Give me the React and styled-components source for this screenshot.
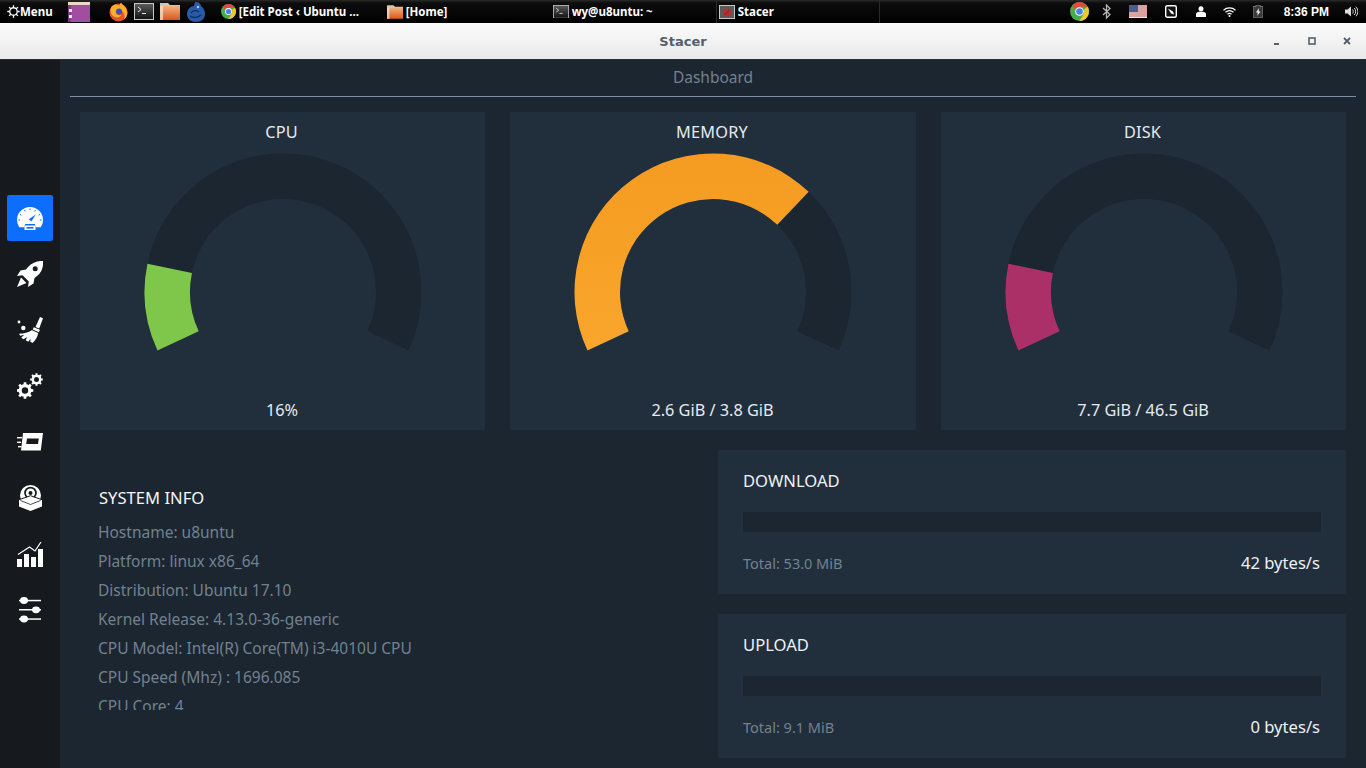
import React from 'react'
import styled, { createGlobalStyle } from 'styled-components'

const GlobalStyle = createGlobalStyle`
  html, body { margin: 0; padding: 0; background: #1b2631; overflow: hidden; }
  * { box-sizing: border-box; }
`

// gauge maths: arc runs 230deg, from 25deg below the left horizontal
const CX = 140
const CY = 139
const OUTER = 138.5
const INNER = 93

function polar(r, deg) {
  const a = (deg * Math.PI) / 180
  return [CX - r * Math.cos(a), CY - r * Math.sin(a)]
}

function arcPath(from, to) {
  const [x1, y1] = polar(OUTER, from)
  const [x2, y2] = polar(OUTER, to)
  const [x3, y3] = polar(INNER, to)
  const [x4, y4] = polar(INNER, from)
  const large = to - from > 180 ? 1 : 0
  return `M${x1} ${y1}A${OUTER} ${OUTER} 0 ${large} 1 ${x2} ${y2}L${x3} ${y3}A${INNER} ${INNER} 0 ${large} 0 ${x4} ${y4}Z`
}

function Gauge({ percent, color }) {
  const end = -25 + (230 * percent) / 100
  return (
    <GaugeSvg viewBox="0 0 280 210" width="280" height="210">
      <path d={arcPath(-25, 205)} fill="#1b2631" />
      <path d={arcPath(-25, end)} fill={color} />
    </GaugeSvg>
  )
}

// toothed wheel with a round hole, for the tools icon
function gearPath(cx, cy, outer, root, hole, teeth) {
  const step = (Math.PI * 2) / teeth
  let d = ''
  for (let i = 0; i < teeth; i++) {
    const a = i * step
    const pts = [
      [root, a - step * 0.5],
      [root, a - step * 0.28],
      [outer, a - step * 0.2],
      [outer, a + step * 0.2],
      [root, a + step * 0.28],
    ]
    pts.forEach(([r, t], j) => {
      const x = (cx + r * Math.cos(t)).toFixed(2)
      const y = (cy + r * Math.sin(t)).toFixed(2)
      d += `${i === 0 && j === 0 ? 'M' : 'L'}${x} ${y}`
    })
  }
  d += `ZM${cx + hole} ${cy}a${hole} ${hole} 0 1 0 ${-hole * 2} 0a${hole} ${hole} 0 1 0 ${hole * 2} 0Z`
  return d
}

const Window = styled.div`
  width: 1366px;
  height: 768px;
  display: flex;
  flex-direction: column;
  overflow: hidden;
  font-family: "Noto Sans", sans-serif;
`
const Panel = styled.div`
  height: 23px;
  flex: none;
  display: flex;
  align-items: center;
  background: linear-gradient(#2a2a2a 0, #0c0c0c 3px, #000 100%);
  color: #fff;
  font-family: "Noto Sans", sans-serif;
  font-size: 11.5px;
  font-weight: 700;
  padding-left: 7px;
`
const PanelItem = styled.div`
  display: flex;
  align-items: center;
  flex: none;
  gap: ${p => p.$gap ?? 3}px;
  width: ${p => (p.$w ? `${p.$w}px` : 'auto')};
  margin-left: ${p => p.$ml ?? 0}px;
  height: 100%;
  white-space: nowrap;
`
const Separator = styled.div`
  width: 1px;
  height: 100%;
  flex: none;
  background: #2b2b2b;
`
const Tray = styled.div`
  margin-left: auto;
  display: flex;
  align-items: center;
  height: 100%;
  padding-right: 8px;
`
const Clock = styled.span`
  margin-left: 21px;
  font-family: "Liberation Sans", sans-serif;
  font-size: 12px;
`
const TitleBar = styled.div`
  height: 37px;
  flex: none;
  position: relative;
  display: flex;
  align-items: center;
  justify-content: center;
  background: linear-gradient(#fbfbfb, #e9e9e9);
  border-bottom: 1px solid #2d2d2d;
  color: #555f6a;
  font-family: "DejaVu Sans", sans-serif;
  font-size: 13px;
  font-weight: 700;
`
const WindowButtons = styled.div`
  position: absolute;
  right: 15px;
  top: 14px;
  display: flex;
  gap: 27px;
`
const WinIcon = styled.svg`
  display: block;
`
const Body = styled.div`
  flex: 1;
  display: flex;
  min-height: 0;
`
const Sidebar = styled.nav`
  width: 60px;
  flex: none;
  background: #16191d;
  display: flex;
  flex-direction: column;
  align-items: center;
  padding-top: 135px;
  gap: 10px;
`
const NavButton = styled.div`
  width: 46px;
  height: 46px;
  border-radius: 2px;
  display: flex;
  align-items: center;
  justify-content: center;
  background: ${p => (p.$active ? '#0d6efd' : 'transparent')};
  color: #fff;
`
const Main = styled.main`
  flex: 1;
  min-width: 0;
  background: #1b2631;
  padding: 0 10px;
  display: flex;
  flex-direction: column;
`
const PageTitle = styled.div`
  height: 37px;
  flex: none;
  display: flex;
  align-items: center;
  justify-content: center;
  border-bottom: 1px solid #7d90a3;
  color: #73818f;
  font-size: 15.5px;
  padding-bottom: 2px;
`
const Gauges = styled.section`
  display: grid;
  grid-template-columns: 405px 406px 405px;
  column-gap: 25px;
  padding: 15px 10px 0;
`
const GaugeCard = styled.div`
  height: 318px;
  background: #212f3d;
  display: flex;
  flex-direction: column;
  align-items: center;
  color: #e6eaee;
  font-size: 16.3px;
`
const GaugeTitle = styled.div`
  height: 41px;
  line-height: 40px;
  flex: none;
  padding-right: 2px;
  letter-spacing: 0.2px;
`
const GaugeSvg = styled.svg`
  flex: none;
`
const GaugeValue = styled.div`
  margin-top: 35px;
  line-height: 24px;
  padding-right: 1px;
`
const Lower = styled.section`
  display: flex;
  padding: 20px 10px 0;
`
const InfoBlock = styled.div`
  width: 638px;
  flex: none;
  padding: 36px 0 0 18px;
`
const InfoTitle = styled.div`
  color: #f4f6f8;
  font-size: 16.6px;
  line-height: 24px;
  margin: 0 0 8px 1px;
`
const InfoList = styled.div`
  height: 192px;
  overflow: hidden;
  color: #73818f;
  font-size: 15.5px;
`
const InfoRow = styled.div`
  height: 29px;
  line-height: 29px;
  white-space: nowrap;
`
const Network = styled.div`
  flex: 1;
  display: flex;
  flex-direction: column;
  gap: 20px;
`
const NetCard = styled.div`
  height: 144px;
  background: #212f3d;
  padding: 19px 25px 0;
`
const NetTitle = styled.div`
  color: #eef1f4;
  font-size: 16.6px;
  line-height: 24px;
`
const NetBar = styled.div`
  height: 20px;
  margin-top: 19px;
  background: #1b2631;
`
const NetFooter = styled.div`
  display: flex;
  justify-content: space-between;
  align-items: center;
  margin-top: 19px;
  padding-right: 1px;
`
const NetTotal = styled.span`
  color: #73818f;
  font-size: 14.5px;
`
const NetSpeed = styled.span`
  color: #eef1f4;
  font-size: 16.6px;
`
const HiddenDefs = styled.svg`
  position: absolute;
  width: 0;
  height: 0;
`

const MenuGear = () => (
  <svg width="13" height="13" viewBox="0 0 16 16" fill="none" stroke="#fff" strokeWidth="1.6">
    <circle cx="8" cy="8" r="4.6" />
    <path d="M8 .4v2.8M8 12.800v2.800M.4 8h2.800M12.800 8h2.800M2.600 2.600l2 2M11.400 11.400l2 2M2.600 13.400l2-2M11.400 4.600l2-2" />
  </svg>
)
const MintMenu = () => (
  <svg width="22" height="20" viewBox="0 0 22 20">
    <rect width="22" height="20" fill="#a24ea0" />
    <rect width="22" height="3" fill="#e9dcc4" />
    <rect y="3" width="3" height="17" fill="#7e3a80" />
    <rect x="1" y="7" width="3" height="3" fill="#eee" />
    <rect x="1" y="13" width="3" height="3" fill="#eee" />
  </svg>
)
const Firefox = () => (
  <svg width="19" height="20" viewBox="0 0 20 20">
    <circle cx="10" cy="10.500" r="9.500" fill="#e4532a" />
    <path d="M3 4c4-3 5-2 7-1s1-2 3-3c0 2 5 4 6 9 1 4-1 7-3 9 1-4 0-8-3-9-2-1-5 0-5 2s3 3 5 2c-1 3-6 4-9 1S1 7 3 4z" fill="#f8b02c" />
    <circle cx="10.500" cy="9.500" r="3.200" fill="#3c4fb4" />
  </svg>
)
const Terminal = ({ size = 20 }) => (
  <svg width={size} height={size * 0.85} viewBox="0 0 20 17">
    <defs>
      <linearGradient id="termbg" x1="0" y1="0" x2="0" y2="1">
        <stop offset="0" stopColor="#5c5c5c" />
        <stop offset="1" stopColor="#111" />
      </linearGradient>
    </defs>
    <rect x=".5" y=".5" width="19" height="16" fill="url(#termbg)" stroke="#c8c8c8" />
    <path d="M4 4l3 2.500L4 9M8 10.500h4" stroke="#eee" strokeWidth="1" fill="none" />
  </svg>
)
const Folder = ({ w = 20, h = 17 }) => (
  <svg width={w} height={h} viewBox="0 0 20 17">
    <defs>
      <linearGradient id="foldbg" x1="0" y1="0" x2="0" y2="1">
        <stop offset="0" stopColor="#f2b27c" />
        <stop offset="1" stopColor="#d9581e" />
      </linearGradient>
    </defs>
    <path d="M0 0h8l2 2h10v3H0z" fill="#cfc6bb" />
    <rect y="3" width="20" height="14" fill="url(#foldbg)" />
    <rect width="3" height="14" y="3" fill="#f7e6d4" opacity=".7" />
  </svg>
)
const Chameleon = () => (
  <svg width="18" height="20" viewBox="0 0 18 20">
    <path d="M9 0c3 0 5 2 5 4 3 2 4 5 4 8 0 5-4 8-9 8s-9-3-9-8c0-5 4-8 7-8 0-2 1-4 2-4z" fill="#2a5aa8" />
    <path d="M4 11c2-3 6-3 8-1M3 14c3 2 8 2 11-1" stroke="#0f2d5f" strokeWidth="1.400" fill="none" />
    <circle cx="11" cy="5" r="1.200" fill="#b9d3f2" />
  </svg>
)
const Chrome = ({ size = 15 }) => (
  <svg width={size} height={size} viewBox="0 0 20 20">
    <circle cx="10" cy="10" r="10" fill="#4aae48" />
    <path d="M10 0a10 10 0 0 1 8.660 5H10a5 5 0 0 0-4.600 3L2.200 3.600A10 10 0 0 1 10 0z" fill="#dd4b3e" />
    <path d="M18.660 5A10 10 0 0 1 10 20l4.300-7.500A5 5 0 0 0 14.600 8L18.660 5z" fill="#f6c62d" />
    <circle cx="10" cy="10" r="4.600" fill="#fff" />
    <circle cx="10" cy="10" r="3.500" fill="#4a82e8" />
  </svg>
)
const StacerTask = () => (
  <svg width="16" height="14" viewBox="0 0 16 14">
    <rect x=".5" y=".5" width="15" height="13" fill="#5b5b5b" stroke="#c8c8c8" />
    <circle cx="8" cy="7.500" r="4" fill="#b52f2f" />
    <path d="M5.500 10l5-5" stroke="#742020" strokeWidth="1" />
  </svg>
)
const Bluetooth = () => (
  <svg width="9" height="15" viewBox="0 0 9 15" fill="none" stroke="#b5b5b5" strokeWidth="1.300">
    <path d="M1 4l7 6.500L4.500 14V1L8 4.500 1 11" />
  </svg>
)
const Flag = () => (
  <svg width="18" height="13" viewBox="0 0 18 13">
    <rect width="18" height="13" fill="#eee" />
    <path d="M0 1h18M0 3h18M0 5h18M0 7h18M0 9h18M0 11h18" stroke="#c9574f" strokeWidth="1" />
    <rect width="9" height="7" fill="#4a5d96" />
  </svg>
)
const Sync = () => (
  <svg width="12" height="13" viewBox="0 0 12 13">
    <rect x=".7" y=".7" width="10.600" height="11.600" rx="1.500" fill="#111" stroke="#fff" strokeWidth="1.400" />
    <path d="M3 3.500l5 3 1 3-3-1-3-5z" fill="#fff" />
  </svg>
)
const User = () => (
  <svg width="10" height="11" viewBox="0 0 10 11" fill="#fff">
    <circle cx="5" cy="2.700" r="2.500" />
    <path d="M0 11V8c0-1.500 2-2.500 5-2.500s5 1 5 2.500v3z" />
  </svg>
)
const Wifi = () => (
  <svg width="13" height="10" viewBox="0 0 13 10" fill="none" stroke="#fff" strokeWidth="1.200">
    <path d="M.5 3.200c3.500-3 8.500-3 12 0M2.500 5.200c2.400-2 5.600-2 8 0M4.500 7.200c1.200-1 2.800-1 4 0" />
    <circle cx="6.500" cy="9" r="1" fill="#fff" stroke="none" />
  </svg>
)
const Battery = () => (
  <svg width="10" height="13" viewBox="0 0 10 13">
    <path d="M3 0h4v1.500h3V13H0V1.500h3z" fill="#3a3a3a" stroke="#8b8b8b" strokeWidth=".8" />
    <path d="M6 3L3 7.500h2L4 11l3.500-4.500h-2z" fill="#fff" />
  </svg>
)
const Volume = () => (
  <svg width="13" height="11" viewBox="0 0 13 11" fill="#ddd">
    <path d="M0 3.500h2.500L6 .5v10L2.500 7.500H0z" />
    <path d="M7.500 3.500c1 1 1 3 0 4M9.300 2c1.800 2 1.800 5 0 7M11 .8c2.400 2.800 2.400 6.600 0 9.400" stroke="#ddd" strokeWidth="1" fill="none" />
  </svg>
)

const Speedometer = () => (
  <svg width="26" height="23" viewBox="0 0 26 23">
    <path d="M13 0a13 13 0 0 1 13 13c0 2.800-.9 5.200-2.300 7.200h-4.900l-1-3.200H8.200l-1 3.200H2.300A13 13 0 0 1 0 13 13 13 0 0 1 13 0z" fill="#fff" />
    <path d="M13 1.500v1.600M7.500 3l.8 1.400M18.500 3l-.8 1.400M3 7.400l1.400.8M23 7.400l-1.400.8M1.500 13h1.600M22.900 13h1.600" stroke="#0d6efd" strokeWidth="1" />
    <path d="M11.800 12.200l7.200-5-4.700 7.200z" fill="#0d6efd" />
    <rect x="7.500" y="18.500" width="11" height="4.500" fill="#fff" />
    <rect x="9.500" y="20" width="7" height="1.600" fill="#0d6efd" />
  </svg>
)
const Rocket = () => (
  <svg width="26" height="26" viewBox="0 0 26 26" fill="#fff">
    <path fillRule="evenodd" d="M26 0c-5.500-.3-11 1.500-15 6L9 8.500 3.500 9.500 0 15l5.500-.8 6.300 6.300-.8 5.500 5.500-3.500 1-5.500 2.500-2C25 11 26.500 5.500 26 0zM18.200 5.300a2.500 2.500 0 1 1 0 5 2.500 2.500 0 0 1 0-5z" />
    <path d="M4 16.500l5.500 5.500-6 2.500L0 26l1.500-3.500z" />
  </svg>
)
const Broom = () => (
  <svg width="27" height="26" viewBox="0 0 27 26" fill="#fff">
    <circle cx="2" cy="5" r="1.400" />
    <circle cx="6.300" cy="11" r="2.200" />
    <path d="M23 0l3 1.200-3.800 10.300-3.700-1.500z" />
    <path d="M16.800 10.300l6 2.500-.8 2.500-6.300-2.700z" />
    <path d="M15 13.300l6.200 2.600c-.7 4-2.800 7.500-5.700 10l-2.300-1.300.6-3-2.500 3.100-2.600-1.400 1.500-3.400-3.700 2.400-2.300-1.600 3-3-4 1-1.200-2c5.200-.2 9.500-.9 12.800-3.400z" />
  </svg>
)
const Gears = () => (
  <svg width="27" height="26" viewBox="0 0 27 26" fill="#fff" fillRule="evenodd">
    <path d={gearPath(8, 17.5, 8.4, 6.4, 3.2, 8)} />
    <path d={gearPath(19.5, 6.5, 6.4, 4.9, 2.5, 8)} />
  </svg>
)
const Disks = () => (
  <svg width="26" height="18" viewBox="0 0 26 18" fill="#fff">
    <path fillRule="evenodd" d="M6 0h20l-2.200 17.500H4zM10 5.500l-.8 5.500h11.800l.8-5.500z" />
    <rect y="4" width="5" height="1.400" />
    <rect y="8.600" width="4" height="1.400" />
    <rect x="1" y="13" width="3.500" height="1.400" />
  </svg>
)
const Package = () => (
  <svg width="23" height="26" viewBox="0 0 23 26">
    <circle cx="11.500" cy="10.500" r="10.500" fill="#fff" />
    <circle cx="11.500" cy="8" r="6.300" fill="#16191d" />
    <circle cx="11.500" cy="8" r="4.600" fill="#fff" />
    <circle cx="11.500" cy="8" r="2" fill="#16191d" />
    <path d="M0 15l11.500-4L23 15v6.500L11.500 26 0 21.500z" fill="#fff" />
    <path d="M.5 14.500l11-3.800 11 3.800" fill="none" stroke="#16191d" strokeWidth="1" />
    <path d="M1.500 15.500L11.500 19.500l10-4" fill="none" stroke="#16191d" strokeWidth=".8" />
  </svg>
)
const Chart = () => (
  <svg width="26" height="25" viewBox="0 0 26 25" fill="#fff">
    <rect y="17" width="5" height="8" />
    <rect x="7" y="12" width="5" height="13" />
    <rect x="14" y="15" width="5" height="10" />
    <rect x="21" y="7" width="5" height="18" />
    <path d="M1 12.500L12.500 5 18 9l6-9" fill="none" stroke="#fff" strokeWidth="1.200" />
  </svg>
)
const Sliders = () => (
  <svg width="22" height="26" viewBox="0 0 22 26" fill="#fff">
    <rect y="2.800" width="22" height="1.500" />
    <ellipse cx="5" cy="3.500" rx="4" ry="3.400" />
    <rect y="12" width="22" height="1.500" />
    <ellipse cx="17" cy="12.800" rx="4" ry="3.400" />
    <rect y="21.300" width="22" height="1.500" />
    <ellipse cx="5" cy="22" rx="4" ry="3.400" />
  </svg>
)

const sysInfo = [
  'Hostname: u8untu',
  'Platform: linux x86_64',
  'Distribution: Ubuntu 17.10',
  'Kernel Release: 4.13.0-36-generic',
  'CPU Model: Intel(R) Core(TM) i3-4010U CPU',
  'CPU Speed (Mhz) : 1696.085',
  'CPU Core: 4',
]

const gauges = [
  { title: 'CPU', value: '16%', percent: 16, color: '#7fc74a' },
  { title: 'MEMORY', value: '2.6 GiB / 3.8 GiB', percent: 69, color: 'url(#memGrad)' },
  { title: 'DISK', value: '7.7 GiB / 46.5 GiB', percent: 16, color: '#ab3067' },
]

const nets = [
  { title: 'DOWNLOAD', total: 'Total: 53.0 MiB', speed: '42 bytes/s' },
  { title: 'UPLOAD', total: 'Total: 9.1 MiB', speed: '0 bytes/s' },
]

export default function App() {
  return (
    <>
      <GlobalStyle />
      <HiddenDefs>
        <defs>
          <linearGradient id="memGrad" x1="0" y1="0" x2="0" y2="1">
            <stop offset="0" stopColor="#f59b21" />
            <stop offset="1" stopColor="#f9a62d" />
          </linearGradient>
        </defs>
      </HiddenDefs>
      <Window>
        <Panel>
          <PanelItem $gap={0}><MenuGear />Menu</PanelItem>
          <PanelItem $ml={15}><MintMenu /></PanelItem>
          <PanelItem $ml={19}><Firefox /></PanelItem>
          <PanelItem $ml={6}><Terminal /></PanelItem>
          <PanelItem $ml={6}><Folder /></PanelItem>
          <PanelItem $ml={7}><Chameleon /></PanelItem>
          <PanelItem $ml={16} $w={166}><Chrome />[Edit Post ‹ Ubuntu ...</PanelItem>
          <PanelItem $w={166}><Folder w={16} h={14} />[Home]</PanelItem>
          <PanelItem $w={163}><Terminal size={16} />wy@u8untu: ~</PanelItem>
          <Separator />
          <PanelItem $ml={2} $w={160}><StacerTask />Stacer</PanelItem>
          <Separator />
          <Tray>
            <Chrome size={19} />
            <PanelItem $ml={13}><Bluetooth /></PanelItem>
            <PanelItem $ml={18}><Flag /></PanelItem>
            <PanelItem $ml={18}><Sync /></PanelItem>
            <PanelItem $ml={19}><User /></PanelItem>
            <PanelItem $ml={17}><Wifi /></PanelItem>
            <PanelItem $ml={17}><Battery /></PanelItem>
            <Clock>8:36 PM</Clock>
            <PanelItem $ml={16}><Volume /></PanelItem>
          </Tray>
        </Panel>
        <TitleBar>
          Stacer
          <WindowButtons>
            <WinIcon width="8" height="8" viewBox="0 0 8 8"><rect x="1" y="6" width="5" height="2" fill="#555f6a" /></WinIcon>
            <WinIcon width="8" height="8" viewBox="0 0 8 8"><rect x="1" y="1" width="6" height="6" fill="none" stroke="#555f6a" strokeWidth="1.600" /></WinIcon>
            <WinIcon width="8" height="8" viewBox="0 0 8 8"><path d="M1 1l6 6M7 1l-6 6" stroke="#555f6a" strokeWidth="1.800" /></WinIcon>
          </WindowButtons>
        </TitleBar>
        <Body>
          <Sidebar>
            <NavButton $active><Speedometer /></NavButton>
            <NavButton><Rocket /></NavButton>
            <NavButton><Broom /></NavButton>
            <NavButton><Gears /></NavButton>
            <NavButton><Disks /></NavButton>
            <NavButton><Package /></NavButton>
            <NavButton><Chart /></NavButton>
            <NavButton><Sliders /></NavButton>
          </Sidebar>
          <Main>
            <PageTitle>Dashboard</PageTitle>
            <Gauges>
              {gauges.map(g => (
                <GaugeCard key={g.title}>
                  <GaugeTitle>{g.title}</GaugeTitle>
                  <Gauge percent={g.percent} color={g.color} />
                  <GaugeValue>{g.value}</GaugeValue>
                </GaugeCard>
              ))}
            </Gauges>
            <Lower>
              <InfoBlock>
                <InfoTitle>SYSTEM INFO</InfoTitle>
                <InfoList>
                  {sysInfo.map(row => <InfoRow key={row}>{row}</InfoRow>)}
                </InfoList>
              </InfoBlock>
              <Network>
                {nets.map(n => (
                  <NetCard key={n.title}>
                    <NetTitle>{n.title}</NetTitle>
                    <NetBar />
                    <NetFooter>
                      <NetTotal>{n.total}</NetTotal>
                      <NetSpeed>{n.speed}</NetSpeed>
                    </NetFooter>
                  </NetCard>
                ))}
              </Network>
            </Lower>
          </Main>
        </Body>
      </Window>
    </>
  )
}
